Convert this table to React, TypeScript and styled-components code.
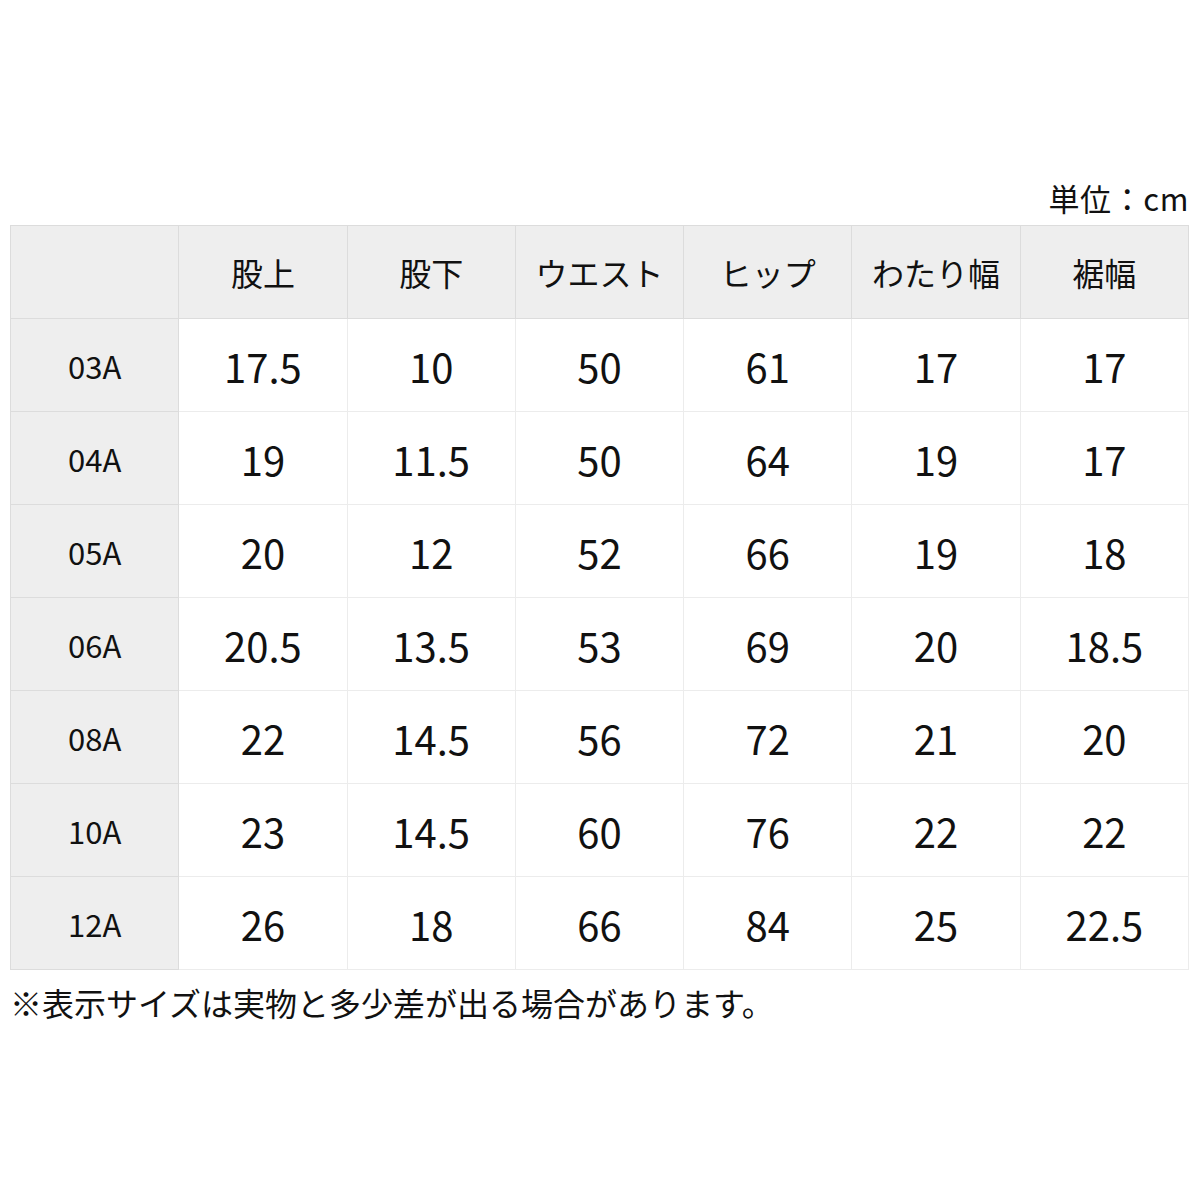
import React from "react";
import styled, { createGlobalStyle } from "styled-components";

const Global = createGlobalStyle`
  html, body { margin: 0; padding: 0; background: #fff; }
  body { font-family: "Noto Sans CJK JP", "Noto Sans", sans-serif; color: #111; }
`;

const Page = styled.div`
  width: 1200px;
  height: 1200px;
  box-sizing: border-box;
  padding: 176px 11px 0 10px;
  display: flex;
  flex-direction: column;
`;

const Unit = styled.div`
  align-self: flex-end;
  font-size: 31px;
  line-height: 44px;
  height: 49px;
  letter-spacing: 0.6px;
`;

const Grid = styled.div`
  display: grid;
  grid-template-columns: repeat(7, 1fr);
  grid-auto-rows: 93px;
  border-top: 1px solid #dcdcdc;
  border-left: 1px solid #dcdcdc;
`;

const Cell = styled.div<{ $kind: "head" | "label" | "data" | "corner" }>`
  display: flex;
  align-items: center;
  justify-content: center;
  border-right: 1px solid ${(p) => (p.$kind === "data" ? "#ececec" : "#dcdcdc")};
  border-bottom: 1px solid ${(p) => (p.$kind === "data" ? "#ececec" : "#dcdcdc")};
  background: ${(p) => (p.$kind === "data" ? "#fff" : "#eeeeee")};
  font-size: ${(p) => (p.$kind === "data" ? "40px" : p.$kind === "label" ? "31px" : "32px")};
  padding-top: ${(p) => (p.$kind === "head" ? "0" : "1px")};
  box-sizing: border-box;
`;

const Note = styled.div`
  font-size: 32px;
  line-height: 46px;
  margin-top: 9px;
`;

const headers = ["股上", "股下", "ウエスト", "ヒップ", "わたり幅", "裾幅"];
const rows: [string, string[]][] = [
  ["03A", ["17.5", "10", "50", "61", "17", "17"]],
  ["04A", ["19", "11.5", "50", "64", "19", "17"]],
  ["05A", ["20", "12", "52", "66", "19", "18"]],
  ["06A", ["20.5", "13.5", "53", "69", "20", "18.5"]],
  ["08A", ["22", "14.5", "56", "72", "21", "20"]],
  ["10A", ["23", "14.5", "60", "76", "22", "22"]],
  ["12A", ["26", "18", "66", "84", "25", "22.5"]],
];

export default function App() {
  return (
    <Page>
      <Global />
      <Unit>単位：cm</Unit>
      <Grid>
        <Cell $kind="corner" />
        {headers.map((h) => (
          <Cell key={h} $kind="head">{h}</Cell>
        ))}
        {rows.map(([label, vals]) => (
          <React.Fragment key={label}>
            <Cell $kind="label">{label}</Cell>
            {vals.map((v, i) => (
              <Cell key={i} $kind="data">{v}</Cell>
            ))}
          </React.Fragment>
        ))}
      </Grid>
      <Note>※表示サイズは実物と多少差が出る場合があります。</Note>
    </Page>
  );
}
